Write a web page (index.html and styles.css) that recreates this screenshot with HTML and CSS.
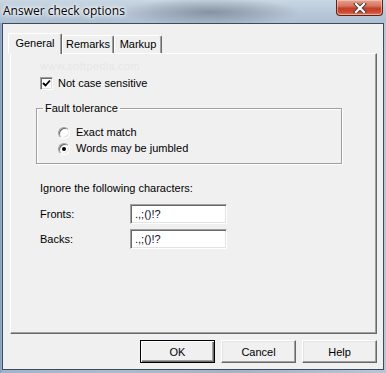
FILE: index.html
```html
<!DOCTYPE html>
<html lang="en">
<head>
  <meta charset="UTF-8">
  <title>Answer check options</title>
  <link rel="stylesheet" href="styles.css">
</head>
<body>
  <div class="window">
    <div class="titlebar">
      <span class="title">Answer check options</span>
      <button class="close-btn" aria-label="Close">
        <svg width="14" height="10" viewBox="0 0 14 10">
          <path d="M3 1 L11 9 M11 1 L3 9" stroke="#3a3a3a" stroke-width="4" stroke-linecap="square"/>
          <path d="M3 1 L11 9 M11 1 L3 9" stroke="#fff" stroke-width="2.2" stroke-linecap="square"/>
        </svg>
      </button>
    </div>

    <div class="client">
      <div class="tabs">
        <div class="tab active">General</div>
        <div class="tab tab-remarks">Remarks</div>
        <div class="tab tab-markup">Markup</div>
      </div>

      <div class="panel">
        <div class="watermark">www.softpedia.com</div>

        <label class="check-row">
          <span class="checkbox">
            <svg width="9" height="9" viewBox="0 0 9 9">
              <path d="M1 4 L3.5 6.5 L8 1.5" fill="none" stroke="#000" stroke-width="1.8"/>
            </svg>
          </span>
          Not case sensitive
        </label>

        <fieldset class="group">
          <legend>Fault tolerance</legend>
          <div class="radios">
            <label class="radio-row">
              <span class="radio"></span>
              Exact match
            </label>
            <label class="radio-row">
              <span class="radio checked"></span>
              Words may be jumbled
            </label>
          </div>
        </fieldset>

        <div class="ignore-label">Ignore the following characters:</div>

        <div class="field-row">
          <span class="field-label">Fronts:</span>
          <div class="textbox">.,;()!?</div>
        </div>
        <div class="field-row">
          <span class="field-label">Backs:</span>
          <div class="textbox">.,;()!?</div>
        </div>
      </div>

      <div class="buttons">
        <button class="btn default">OK</button>
        <button class="btn">Cancel</button>
        <button class="btn">Help</button>
      </div>
    </div>
  </div>
</body>
</html>
```

FILE: styles.css
```css
body {
  margin: 0;
  width: 386px;
  height: 373px;
  overflow: hidden;
  font-family: "Liberation Sans", Arial, sans-serif;
  font-size: 11px;
  color: #000;
}

.window {
  width: 386px;
  height: 373px;
  background: linear-gradient(90deg, #7c9cc2 0px, #9db4cf 2px, #a9bccf 30%, #a3b3c4 60%, #b6c6d6 100%);
  display: flex;
  flex-direction: column;
}

/* title bar */
.titlebar {
  height: 23px;
  display: flex;
  justify-content: space-between;
  align-items: flex-start;
  background:
    radial-gradient(ellipse 90px 14px at 210px 12px, rgba(70, 80, 95, 0.45), rgba(70, 80, 95, 0) 100%),
    linear-gradient(180deg, #c9d6e3 0%, #b7c7d8 60%, #adbfd2 100%);
}

.title {
  padding-left: 3px;
  line-height: 21px;
  font-family: "Open Sans", "Noto Sans", sans-serif;
  font-size: 12px;
  color: #000;
  text-shadow: 0 0 6px #fff, 0 0 4px #fff, 0 0 2px #fff;
}

.close-btn {
  width: 47px;
  height: 16px;
  margin-right: 3px;
  padding: 0;
  border: 1px solid #5e2219;
  border-top: none;
  border-radius: 0 0 4px 4px;
  background: linear-gradient(180deg, #e6a28f 0%, #d7765f 40%, #c3402a 55%, #c94a30 80%, #e08060 100%);
  box-shadow: inset 0 0 0 1px rgba(255, 220, 210, 0.5);
  display: flex;
  align-items: center;
  justify-content: center;
}

/* client area */
.client {
  margin: 0 2px 3px 2px;
  border: 1px solid #3f4b58;
  background: #f0f0f0;
  padding: 9px 6px 6px 7px;
  display: flex;
  flex-direction: column;
}

.tabs {
  display: flex;
  align-items: flex-end;
  height: 20px;
}

.tab {
  height: 18px;
  line-height: 17px;
  text-align: center;
  border-left: 1px solid #fff;
  border-top: 1px solid #fff;
  border-right: 1px solid #696969;
  box-shadow: inset -1px 0 0 #a0a0a0;
  border-radius: 2px 2px 0 0;
  box-sizing: border-box;
  background: #f0f0f0;
}

.tab.active {
  width: 54px;
  height: 21px;
  line-height: 19px;
  margin-left: -2px;
  margin-bottom: -1px;
  position: relative;
  z-index: 1;
}

.tab-remarks {
  width: 52px;
}

.tab-markup {
  width: 48px;
}

.panel {
  height: 281px;
  box-sizing: border-box;
  border-left: 1px solid #fff;
  border-top: 1px solid #fff;
  border-right: 1px solid #696969;
  border-bottom: 1px solid #696969;
  box-shadow: inset -1px -1px 0 #a0a0a0;
  padding: 5px 0 0 29px;
  display: flex;
  flex-direction: column;
  align-items: flex-start;
}

.watermark {
  line-height: 14px;
  color: #e7e7e7;
  font-size: 11px;
  letter-spacing: 0.3px;
  margin-bottom: 4px;
}

.check-row {
  display: flex;
  align-items: center;
  gap: 5px;
  height: 13px;
  line-height: 13px;
}

.checkbox {
  width: 13px;
  height: 13px;
  box-sizing: border-box;
  background: #fff;
  border-top: 1px solid #a0a0a0;
  border-left: 1px solid #a0a0a0;
  border-right: 1px solid #fff;
  border-bottom: 1px solid #fff;
  box-shadow: inset 1px 1px 0 #696969, inset -1px -1px 0 #e3e3e3;
  display: flex;
  align-items: center;
  justify-content: center;
}

.group {
  margin: 12px 0 0 -4px;
  width: 306px;
  box-sizing: border-box;
  border: 1px solid #a0a0a0;
  box-shadow: 1px 1px 0 #fff, inset 1px 1px 0 #fff;
  padding: 0 0 8px 6px;
}

.group legend {
  padding: 0 2px;
  line-height: 13px;
}

.radios {
  margin: 11px 0 0 15px;
  display: flex;
  flex-direction: column;
  gap: 3px;
}

.radio-row {
  display: flex;
  align-items: center;
  gap: 6px;
  height: 13px;
  line-height: 13px;
}

.radio {
  width: 12px;
  height: 12px;
  box-sizing: border-box;
  border-radius: 50%;
  background: #fff;
  border: 1px solid;
  border-color: #a0a0a0 #fff #fff #a0a0a0;
  box-shadow: inset 1px 1px 0 #696969, inset -1px -1px 0 #e3e3e3;
  display: flex;
  align-items: center;
  justify-content: center;
}

.radio.checked::after {
  content: "";
  width: 4px;
  height: 4px;
  border-radius: 50%;
  background: #000;
}

.ignore-label {
  margin-top: 18px;
  line-height: 13px;
}

.field-row {
  display: flex;
  align-items: center;
  margin-top: 9px;
}

.field-row + .field-row {
  margin-top: 5px;
}

.field-label {
  width: 90px;
}

.textbox {
  width: 97px;
  height: 20px;
  box-sizing: border-box;
  background: #fff;
  border-top: 1px solid #a0a0a0;
  border-left: 1px solid #a0a0a0;
  border-right: 1px solid #fff;
  border-bottom: 1px solid #fff;
  box-shadow: inset 1px 1px 0 #696969, inset -1px -1px 0 #e3e3e3;
  padding-left: 4px;
  line-height: 18px;
  color: #0a0a2a;
}

/* dialog buttons */
.buttons {
  display: flex;
  justify-content: flex-end;
  gap: 6px;
  margin-top: 6px;
}

.btn {
  width: 75px;
  height: 23px;
  box-sizing: border-box;
  padding: 0;
  font-family: "Liberation Sans", Arial, sans-serif;
  font-size: 11px;
  color: #000;
  background: #f0f0f0;
  border-top: 1px solid #fff;
  border-left: 1px solid #fff;
  border-right: 1px solid #696969;
  border-bottom: 1px solid #696969;
  box-shadow: inset -1px -1px 0 #a0a0a0, inset 1px 1px 0 #e3e3e3;
}

.btn.default {
  border: 1px solid #000;
  box-shadow: inset 1px 1px 0 #fff, inset -1px -1px 0 #696969, inset -2px -2px 0 #a0a0a0;
}
```
